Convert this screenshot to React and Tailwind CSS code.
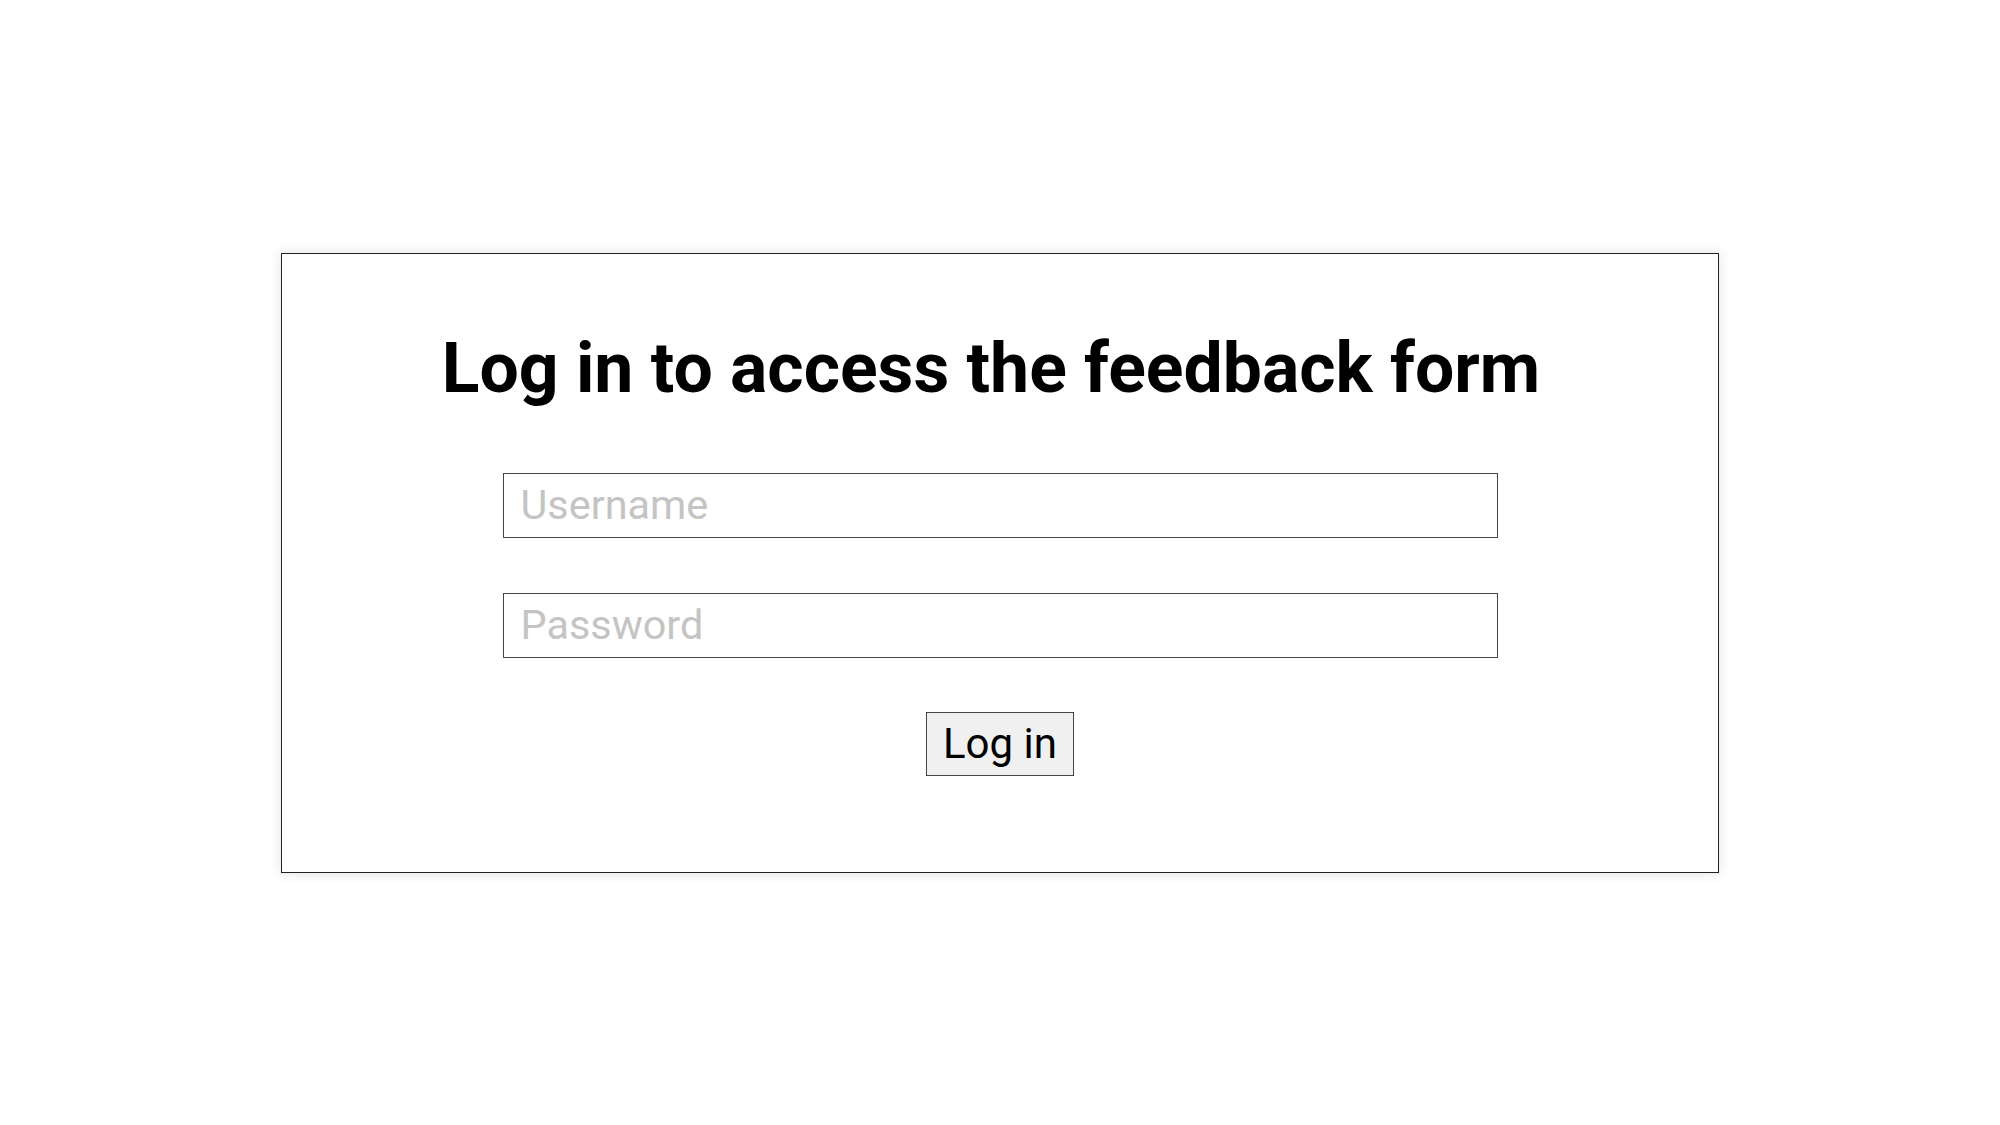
export default function App() {
  return (
    <div className="min-h-screen w-full bg-white flex items-center justify-center" style={{ fontFamily: 'Roboto, "Noto Sans", sans-serif' }}>
      <div className="w-[1438px] border border-[#222] bg-white shadow-[0_0_12px_rgba(0,0,0,0.12)] pt-[73px] pb-[96px] flex flex-col items-center">
        <h1 className="pr-[18px] text-[69.7px] leading-[82px] font-bold text-black text-center">Log in to access the feedback form</h1>
        <form className="mt-[64px] flex flex-col items-center w-full" onSubmit={(e) => e.preventDefault()}>
          <input
            type="text"
            placeholder="Username"
            className="w-[995px] h-[65px] border border-[#444] px-[17px] text-[41.4px] text-black placeholder:text-[#c4c4c4] outline-none"
          />
          <input
            type="password"
            placeholder="Password"
            className="mt-[55px] w-[995px] h-[65px] border border-[#444] px-[17px] text-[41.4px] text-black placeholder:text-[#c4c4c4] outline-none"
          />
          <button
            type="submit"
            className="mt-[54px] h-[64px] px-[16px] border border-[#444] bg-[#f0f0f0] text-[42px] leading-none text-black"
          >
            Log in
          </button>
        </form>
      </div>
    </div>
  )
}
